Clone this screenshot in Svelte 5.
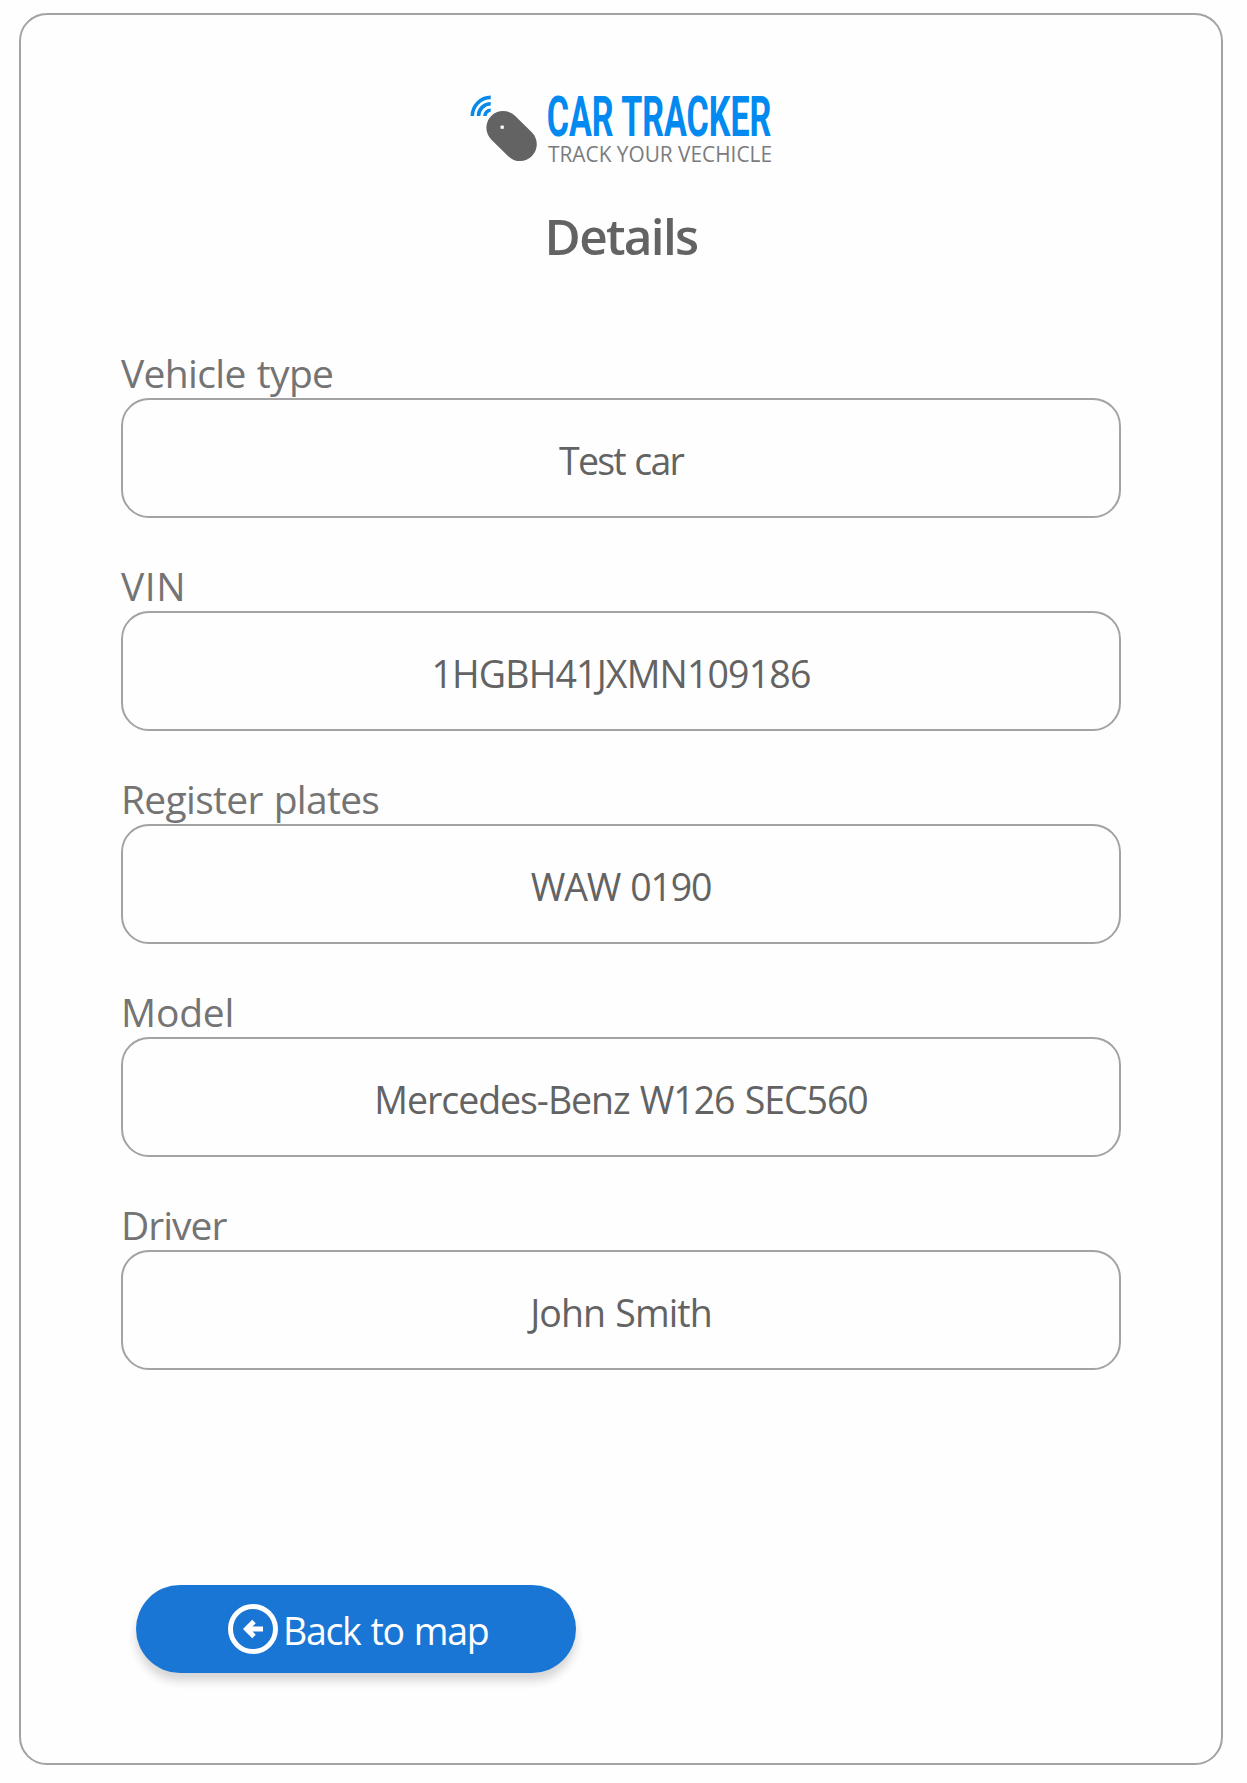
<script>
  // `spacing` tunes the tracking (px) of the label and value text.
  const fields = [
    { label: 'Vehicle type', value: 'Test car', spacing: [-0.65, -1.8] },
    { label: 'VIN', value: '1HGBH41JXMN109186', spacing: [0.6, -0.85] },
    { label: 'Register plates', value: 'WAW 0190', spacing: [-0.7, -1.2] },
    { label: 'Model', value: 'Mercedes-Benz W126 SEC560', spacing: [-0.2, -1.05] },
    { label: 'Driver', value: 'John Smith', spacing: [-1, -0.95] }
  ];
</script>

<main class="card">
  <svg class="logo" width="304" height="76" viewBox="469 89 304 76" role="img" aria-label="Car Tracker">
    <g class="waves">
      <path d="M472.3 116A18.6 18.6 0 0 1 490.7 97.4" />
      <path d="M478.5 116A12.2 12.2 0 0 1 490.7 103.8" />
      <path d="M484.9 116A5.8 5.8 0 0 1 490.7 110.2" />
    </g>
    <path class="fob" d="M503.2 127.8L520 144.3" />
    <rect class="hole" x="500.6" y="125.6" width="3.2" height="3.2" />
    <text class="brand" x="546.8" y="135.5" textLength="224.5" lengthAdjust="spacingAndGlyphs">CAR TRACKER</text>
    <text class="tagline" x="548" y="161.6" textLength="224" lengthAdjust="spacingAndGlyphs">TRACK YOUR VECHICLE</text>
  </svg>

  <h1>Details</h1>

  <dl>
    {#each fields as field}
      <div class="field">
        <dt style:letter-spacing="{field.spacing[0]}px">{field.label}</dt>
        <dd style:letter-spacing="{field.spacing[1]}px">{field.value}</dd>
      </div>
    {/each}
  </dl>

  <button type="button">
    <svg width="50" height="50" viewBox="0 0 50 50" aria-hidden="true">
      <circle cx="25" cy="25" r="22.5" />
      <path d="M26 17.5L18.5 25L26 32.5M18.5 25H35" />
    </svg>
    <span>Back to map</span>
  </button>
</main>

<style>
  :global(body) {
    margin: 0;
    background: #fefefe;
  }

  .card {
    box-sizing: border-box;
    display: flex;
    flex-direction: column;
    width: 1204px;
    height: 1752px;
    margin: 13px 0 0 19px;
    padding: 74px 100px 0;
    border: 2px solid #a3a3a3;
    border-radius: 28px;
    color: #636363;
    font-family: 'Open Sans', 'Noto Sans', sans-serif;
  }

  .logo {
    display: block;
    align-self: center;
    flex: none;
    overflow: visible;
  }

  .waves path {
    fill: none;
    stroke: #0a8ae8;
    stroke-width: 3.6;
  }

  .fob {
    stroke: #636363;
    stroke-width: 33.6;
    stroke-linecap: round;
  }

  .hole {
    fill: #fff;
  }

  .brand {
    fill: #028af0;
    font: 700 55px Roboto, sans-serif;
  }

  .tagline {
    fill: #7b7b7f;
    font: 400 22px 'Open Sans', sans-serif;
  }

  h1 {
    margin: 36px 0 0;
    font-size: 49.5px;
    font-weight: 600;
    line-height: 70px;
    letter-spacing: -1.7px;
    text-align: center;
  }

  dl {
    display: flex;
    flex-direction: column;
    gap: 45px;
    margin: 79px 0 0;
  }

  dt {
    height: 48px;
    color: #747474;
    font-size: 39px;
    line-height: 46px;
    word-spacing: 1.5px;
  }

  dd {
    box-sizing: border-box;
    height: 120px;
    margin: 0;
    padding-top: 3px;
    border: 2px solid #a3a3a3;
    border-radius: 28px;
    font-size: 37.5px;
    line-height: 116px;
    word-spacing: 1.5px;
    text-align: center;
  }

  button {
    display: flex;
    align-items: center;
    gap: 5px;
    width: 440px;
    height: 88px;
    margin: 215px 0 0 15px;
    padding: 0 0 0 92px;
    border: 0;
    border-radius: 44px;
    background: #1976d4;
    box-shadow: 0 8px 10px rgba(0, 0, 0, 0.16);
    color: #fff;
    font: inherit;
    font-size: 37.5px;
    letter-spacing: -1.3px;
    word-spacing: 1.5px;
    white-space: nowrap;
  }

  button span {
    padding-top: 2px;
  }

  button svg {
    flex: none;
    fill: none;
    stroke: #fff;
    stroke-width: 5;
  }
</style>
